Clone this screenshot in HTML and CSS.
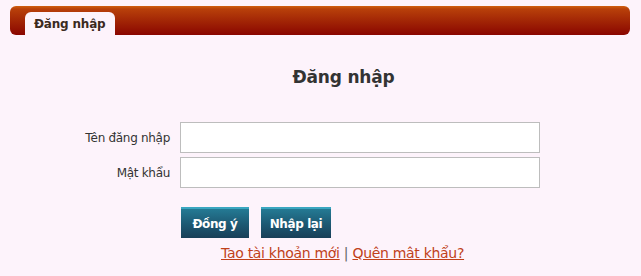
FILE: index.html
```html
<!DOCTYPE html>
<html lang="vi">
<head>
<meta charset="utf-8">
<title>Đăng nhập</title>
<link rel="stylesheet" href="styles.css">
</head>
<body>
<div class="page">
  <div class="bar">
    <div class="tab">Đăng nhập</div>
  </div>
  <h1 class="title">Đăng nhập</h1>
  <form class="form">
    <div class="row">
      <label class="label">Tên đăng nhập</label>
      <input class="field" type="text">
    </div>
    <div class="row">
      <label class="label">Mật khẩu</label>
      <input class="field" type="password">
    </div>
    <div class="buttons">
      <button class="btn btn-ok" type="button">Đồng ý</button>
      <button class="btn btn-reset" type="button">Nhập lại</button>
    </div>
    <div class="links">
      <a href="#" class="link">Tao tài khoản mới</a> <span class="sep">|</span> <a href="#" class="link">Quên mât khẩu?</a>
    </div>
  </form>
</div>
</body>
</html>
```
FILE: styles.css
```css
html, body {
  margin: 0;
  padding: 0;
  background: #fdf3fb;
}
body {
  font-family: Tahoma, "DejaVu Sans", Verdana, sans-serif;
  color: #333;
}
.page {
  width: 641px;
  height: 276px;
  padding-top: 6px;
  box-sizing: border-box;
}
.bar {
  margin: 0 11px 0 10px;
  height: 29px;
  border-radius: 6px;
  background: linear-gradient(to bottom, #d0600f 0px, #b8400a 3px, #a02305 16px, #8a0600 29px);
  display: flex;
  align-items: flex-end;
  padding-left: 15px;
}
.tab {
  width: 90px;
  height: 23px;
  background: #fdf3fb;
  border-radius: 6px 6px 0 0;
  font-size: 12px;
  font-weight: bold;
  color: #3b2a1e;
  box-sizing: border-box;
  padding-left: 9px;
  line-height: 25px;
  letter-spacing: -0.2px;
}
.title {
  margin: 30px 0 0 0;
  text-align: center;
  font-size: 17px;
  font-weight: bold;
  color: #333;
  line-height: 24px;
  padding-left: 46px;
  letter-spacing: -0.2px;
}
.form {
  margin-top: 33px;
  display: flex;
  flex-direction: column;
}
.row {
  display: flex;
  align-items: center;
  height: 31px;
  margin-bottom: 4px;
}
.label {
  width: 170px;
  text-align: right;
  font-size: 12px;
  color: #333;
  letter-spacing: -0.3px;
}
.field {
  margin-left: 10px;
  width: 360px;
  height: 31px;
  box-sizing: border-box;
  border: 1px solid #bdbdbd;
  background: #fff;
  padding: 0 4px;
}
.buttons {
  display: flex;
  gap: 12px;
  margin-left: 181px;
  margin-top: 15px;
}
.btn {
  height: 31px;
  border: none;
  border-top: 2px solid #3aa6c0;
  background: linear-gradient(to bottom, #247a94 0%, #1d5a74 50%, #183f58 100%);
  color: #fff;
  font-family: Tahoma, "DejaVu Sans", Verdana, sans-serif;
  font-size: 12px;
  font-weight: bold;
  padding: 0;
  white-space: nowrap;
  letter-spacing: -0.4px;
  cursor: pointer;
}
.btn-ok {
  width: 68px;
}
.btn-reset {
  width: 70px;
}
.links {
  margin-left: 221px;
  margin-top: 7px;
  font-size: 14px;
  letter-spacing: -0.3px;
  color: #777;
}
.link {
  color: #c0411a;
  text-decoration: underline;
}
.sep {
  color: #666;
}
```
